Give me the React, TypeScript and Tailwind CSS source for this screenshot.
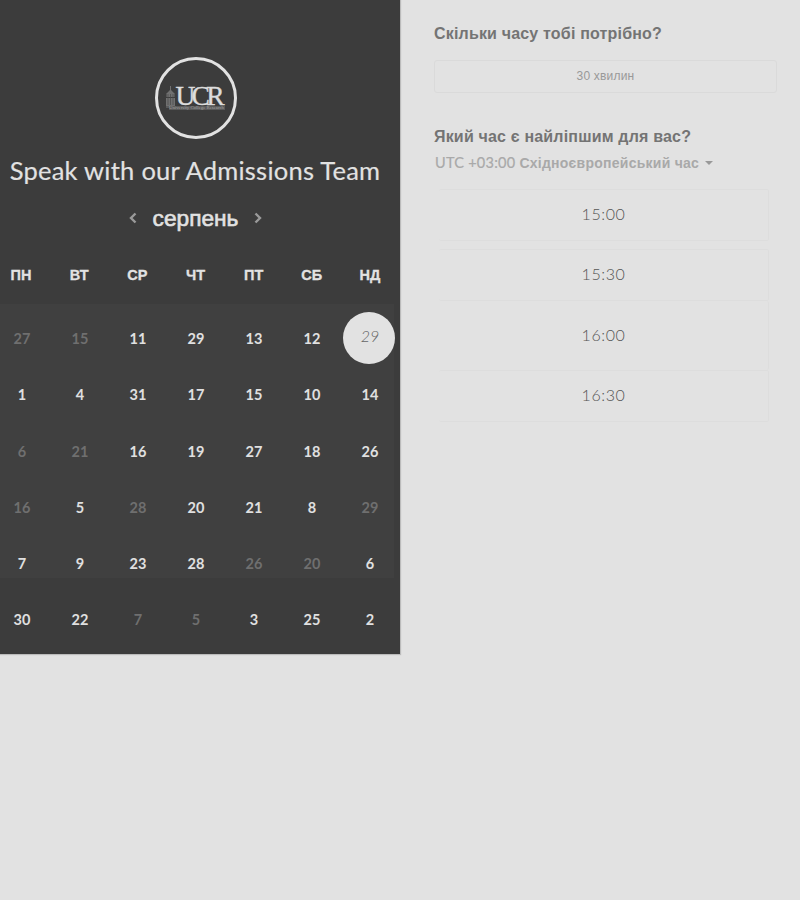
type Day = { n: number; off?: boolean; selected?: boolean };

const d = (n: number): Day => ({ n });
const o = (n: number): Day => ({ n, off: true });

const weekdays = ['ПН', 'ВТ', 'СР', 'ЧТ', 'ПТ', 'СБ', 'НД'];

const weeks: Day[][] = [
  [o(27), o(15), d(11), d(29), d(13), d(12), { n: 29, selected: true }],
  [d(1), d(4), d(31), d(17), d(15), d(10), d(14)],
  [o(6), o(21), d(16), d(19), d(27), d(18), d(26)],
  [o(16), d(5), o(28), d(20), d(21), d(8), o(29)],
  [d(7), d(9), d(23), d(28), o(26), o(20), d(6)],
  [d(30), d(22), o(7), o(5), d(3), d(25), d(2)],
];

const slots = [
  { time: '15:00', box: 'h-[52px] border-t border-b' },
  { time: '15:30', box: 'mt-2 h-[52px] border-t border-b' },
  { time: '16:00', box: 'h-[69px]' },
  { time: '16:30', box: 'h-[52px] border-t border-b' },
];

function Logo() {
  return (
    <div className="mt-[57px] mr-[9px] flex h-[82px] w-[82px] items-center justify-center rounded-full border-[3px] border-[#e2e2e2]">
      <svg className="overflow-visible" width="62" height="36" viewBox="0 0 62 36">
        <g fill="#707070">
          <path d="M5 6h1v4l3 3H2l3-3z" />
          <path d="M1.500 13h8v4h-8zM1 18h9v8H1z" />
          <path d="M1 26h59v4H4v-2H1z" fill="#5a5a5a" />
        </g>
        <path d="M3 14v11M5.500 14v11M8 14v11" stroke="#484848" strokeWidth=".7" />
        <g fontFamily="Liberation Serif, serif">
          <text x="10.500" y="24.500" textLength="49" lengthAdjust="spacing" fontSize="27.500" fill="#dcdcdc" stroke="#dcdcdc" strokeWidth=".4">UCR</text>
          <text x="4" y="29.300" textLength="55" lengthAdjust="spacingAndGlyphs" fontSize="4.500" fill="#a5a5a5">University College Research</text>
        </g>
      </svg>
    </div>
  );
}

function Chevron({ path }: { path: string }) {
  return (
    <svg width="8" height="12" viewBox="0 0 8 12" fill="none" stroke="#9a9a9a" strokeWidth="2.400">
      <path d={path} />
    </svg>
  );
}

function DayCell({ day }: { day: Day }) {
  if (day.selected) {
    return (
      <div className="flex items-center justify-center">
        <span className="-mt-[3px] -ml-[2px] flex h-[52px] w-[52px] shrink-0 items-center justify-center rounded-full bg-[#e2e2e2] pb-[3px] pl-[2px] text-[16px] font-light text-[#666] italic">
          {day.n}
        </span>
      </div>
    );
  }
  return (
    <div className={`flex items-center justify-center text-[14.500px] font-bold ${day.off ? 'text-[#6f6f6f]' : 'text-[#e0e0e0]'}`}>
      {day.n}
    </div>
  );
}

export default function App() {
  return (
    <div className="flex h-[900px] w-[800px] items-start overflow-hidden bg-[#e2e2e2] font-['Liberation_Sans',sans-serif]">
      <section className="flex h-[654px] w-[400px] shrink-0 flex-col items-center overflow-hidden bg-[#3c3c3c] shadow-[0_0_1px_1px_#bbb]">
        <Logo />
        <h1 className="mt-[15px] mr-[10px] h-[32px] shrink-0 font-['Lato',sans-serif] text-[25.500px] leading-[32px] tracking-[0.250px] whitespace-nowrap text-[#e2e2e2] [-webkit-text-stroke:0.150px_#e2e2e2]">
          Speak with our Admissions Team
        </h1>
        <div className="mt-[17px] mr-[9px] flex h-[30px] shrink-0 items-center gap-[16px]">
          <Chevron path="M6.500 1.500 2 6l4.500 4.500" />
          <span className="text-[22.700px] leading-[30px] text-[#e2e2e2] [-webkit-text-stroke:0.600px_#e2e2e2]">серпень</span>
          <Chevron path="M1.500 1.500 6 6l-4.500 4.500" />
        </div>
        <div className="mt-[32px] -ml-[8px] grid h-[20px] w-[407px] shrink-0 grid-cols-7 self-start text-center text-[14.500px] leading-[20px] font-bold text-[#e2e2e2] [-webkit-text-stroke:0.300px_#e2e2e2]">
          {weekdays.map((w) => (
            <span key={w}>{w}</span>
          ))}
        </div>
        <div className="mt-[19px] h-[350px] w-full shrink-0 bg-[linear-gradient(#404040,#404040)] bg-[length:394px_274px] bg-no-repeat">
          <div className="-ml-[7px] grid h-[345px] w-[406px] auto-rows-[56.200px] grid-cols-7 pt-[7px] font-['Lato',sans-serif]">
            {weeks.flatMap((week, r) => week.map((day, c) => <DayCell key={`${r}-${c}`} day={day} />))}
          </div>
        </div>
      </section>

      <section className="flex w-[400px] flex-col pl-[34px]">
        <h2 className="mt-[24px] h-[20px] text-[16px] leading-[20px] font-bold tracking-[0.180px] whitespace-nowrap text-[#747474]">
          Скільки часу тобі потрібно?
        </h2>
        <div className="mt-[16px] flex h-[33px] w-[343px] items-center justify-center rounded-[3px] border border-[#dadada] pb-[1px] text-[12px] tracking-[0.200px] text-[#999]">
          30 хвилин
        </div>
        <h2 className="mt-[34px] h-[20px] text-[16px] leading-[20px] font-bold tracking-[0.180px] whitespace-nowrap text-[#747474]">
          Який час є найліпшим для вас?
        </h2>
        <div className="mt-[6px] ml-[1px] flex h-[20px] items-center whitespace-nowrap text-[#a9a9a9]">
          <span className="-mt-[1px] font-['Lato',sans-serif] text-[14.500px] tracking-[0.260px] [-webkit-text-stroke:0.200px_#a9a9a9]">UTC +03:00</span>
          <span className="ml-[4px] text-[14px] font-bold tracking-[0.250px]">Східноєвропейський час</span>
          <svg className="ml-[6px]" width="8" height="4" viewBox="0 0 8 4" fill="#999">
            <path d="M0 0h8L4 4z" />
          </svg>
        </div>
        <div className="mt-[16px] ml-[5px] flex w-[330px] flex-col">
          {slots.map((s) => (
            <div key={s.time} className={`flex items-center justify-center rounded-[2px] border-r border-[#dddddd] pb-[2px] font-['Lato',sans-serif] text-[16px] font-light tracking-[0.600px] text-[#555] ${s.box}`}>
              {s.time}
            </div>
          ))}
        </div>
      </section>
    </div>
  );
}
